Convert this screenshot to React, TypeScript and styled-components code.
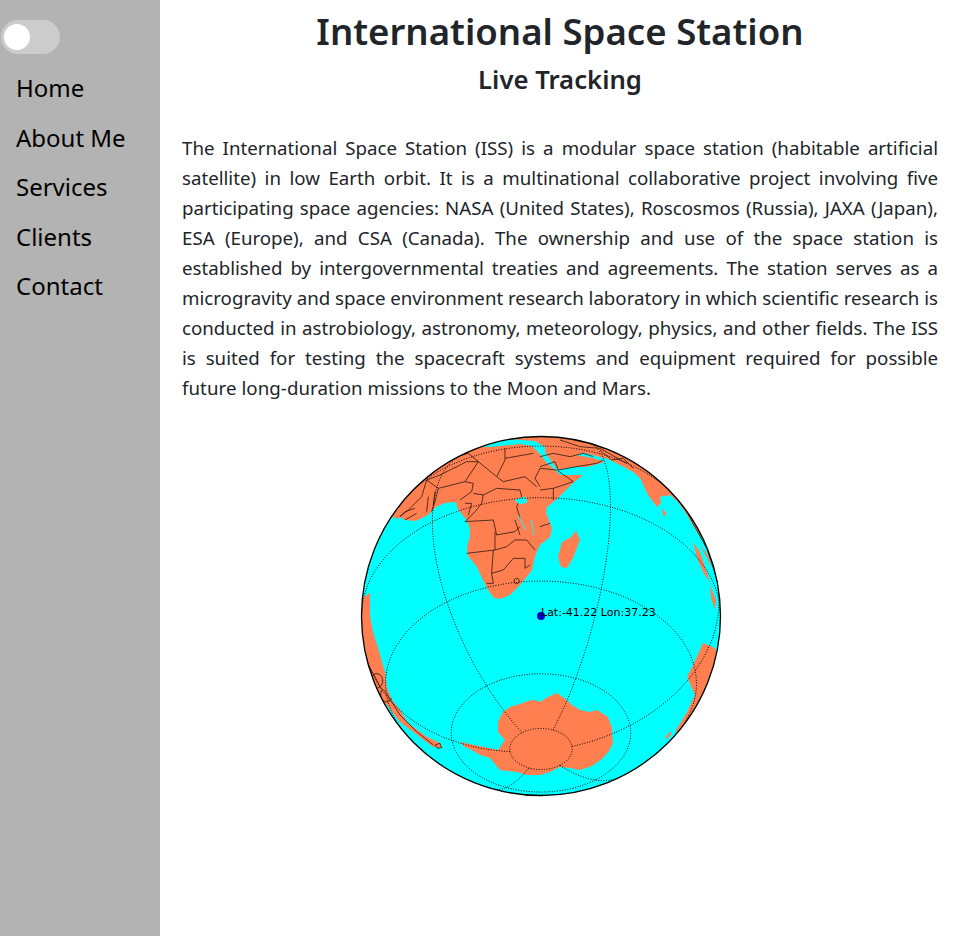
import React from "react";
import styled, { createGlobalStyle } from "styled-components";

const Global = createGlobalStyle`
  html, body { margin: 0; padding: 0; background: #fff; }
  body { font-family: "Noto Sans", "Open Sans", sans-serif; color: #212529; }
`;
const Page = styled.div`
  display: grid;
  grid-template-columns: 160px 1fr;
  min-height: 936px;
`;
const Sidebar = styled.nav`
  background: #b3b3b3;
  padding-top: 20px;
`;
const Toggle = styled.div`
  width: 59px;
  height: 34px;
  margin-left: 1px;
  margin-bottom: 9px;
  border-radius: 34px;
  background: #ccc;
  display: flex;
  align-items: center;
  padding-left: 3px;
  box-sizing: border-box;
`;
const Knob = styled.span`
  width: 26px;
  height: 26px;
  border-radius: 50%;
  background: #fff;
`;
const NavLink = styled.a`
  display: block;
  padding: 6px 8px 6px 16px;
  font-size: 24px;
  line-height: 37.5px;
  color: #000;
  text-decoration: none;
`;
const Main = styled.main`
  padding: 7px 22px 0;
  min-width: 0;
`;
const Title = styled.h1`
  margin: 0 0 8px;
  font-size: 36.6px;
  line-height: 48px;
  font-weight: 600;
  text-align: center;
`;
const Subtitle = styled.h2`
  margin: 0 0 36px;
  font-size: 25.7px;
  line-height: 34px;
  font-weight: 600;
  text-align: center;
`;
const Body = styled.p`
  margin: 0 0 22px;
  font-size: 18.7px;
  line-height: 30px;
`;
const Line = styled.span<{ $squeeze?: boolean; $last?: boolean }>`
  display: block;
  white-space: nowrap;
  text-align: ${(p) => (p.$last ? "left" : "justify")};
  text-align-last: ${(p) => (p.$last ? "left" : "justify")};
  word-spacing: ${(p) => (p.$squeeze ? "-2.4px" : "0")};
  letter-spacing: ${(p) => (p.$last ? "0.06px" : "0")};
`;
const Globe = styled.svg`
  display: block;
  margin: 0 auto;
  width: 418px;
  height: 380px;
`;
const Label = styled.text`
  font-family: "DejaVu Sans", sans-serif;
  font-size: 11px;
  fill: #000;
`;

const CX = 541, CY = 616, R = 179.5;
const rad = Math.PI / 180;
const LAT0 = -41.22 * rad, LON0 = 37.23 * rad;

function project(lat: number, lon: number): [number, number] | null {
  const p = lat * rad, l = lon * rad - LON0;
  const c = Math.sin(LAT0) * Math.sin(p) + Math.cos(LAT0) * Math.cos(p) * Math.cos(l);
  if (c < 0) return null;
  const x = R * Math.cos(p) * Math.sin(l);
  const y = R * (Math.cos(LAT0) * Math.sin(p) - Math.sin(LAT0) * Math.cos(p) * Math.cos(l));
  return [CX + x, CY - y];
}
function trace(points: [number, number][]): string {
  let d = "", pen = false;
  for (const [lat, lon] of points) {
    const q = project(lat, lon);
    if (!q) { pen = false; continue; }
    d += `${pen ? "L" : "M"}${q[0].toFixed(1)} ${q[1].toFixed(1)}`;
    pen = true;
  }
  return d;
}
const graticule: string[] = [];
for (const lat of [-80, -60, -30, 0, 30, 60]) {
  const pts: [number, number][] = [];
  for (let lon = -180; lon <= 180; lon += 1) pts.push([lat, lon]);
  graticule.push(trace(pts));
}
for (const lon of [-120, -60, 0, 60, 120, 180]) {
  const pts: [number, number][] = [];
  for (let lat = -80; lat <= 80; lat += 1) pts.push([lat, lon]);
  graticule.push(trace(pts));
}

const land = [
  // Africa
  "M398 519L400 517L405 520L416 521L428 515L436 507L445 503L456 502L457 507L460 512L466 519L470 528L470 536L467 548L468 556L477 567L482 578L488 590L494 598L500 599L510 595L518 587L525 579L532 570L535 556L540 545L550 537L552 528L550 523L546 512L547 507L557 499L573 483L583 475L560 475L553 468L546 462L540 454L532 446L520 444L490 447L470 446L440 440L380 480L375 510Z",
  // Arabia, Asia
  "M545 452L552 462L558 470L573 467L587 467L605 462L593 458L576 455L585 453L600 457L608 459L620 465L633 472L640 478L648 495L657 507L661 503L660 497L670 495L678 502L687 515L697 532L720 560L740 500L650 430L500 425L495 437L520 440L535 441L545 447Z",
  // Madagascar
  "M576 531L580 540L573 558L567 568L561 567L558 557L562 542L570 538Z",
  // Sri Lanka
  "M662 508L666 513L666 516L663 515Z",
  // Indonesia
  "M693 542L700 552L706 570L710 582L704 574L697 558Z",
  "M700 545L708 555L712 570L706 556Z",
  "M710 585L716 600L715 610L711 598Z",
  // South America
  "M350 600L362 598L370 593L370 615L373 632L378 648L385 672L387 688L392 700L400 710L408 723L427 737L440 743L442 748L433 747L420 737L400 722L387 705L360 690Z",
  // Antarctica
  "M460 742L465 747L472 750L480 755L490 758L495 764L500 770L517 772L527 775L540 775L550 772L560 767L570 768L580 770L592 766L603 758L609 751L613 743L612 735L612 728L608 717L597 710L590 712L580 710L572 705L567 700L557 693L548 697L540 702L535 700L528 701L520 704L510 707L503 712L498 722L498 732L505 740L498 750Z",
  // Australia
  "M703 643L715 648L718 655L730 660L720 700L690 730L675 732L687 712L695 695L687 677L693 665Z",
  "M665 737L670 732L672 733L667 739Z",
  "M633 770L637 767L638 768L635 771Z",
];

const africaBorders = [
  "M230 165L215 215L175 255L150 275",
  "M230 165L265 190L255 230L245 260",
  "M265 190L345 170L385 110L350 110L270 150L230 165",
  "M385 110L440 155L465 105L465 70",
  "M345 170L370 175L365 200L330 225",
  "M440 155L460 170L525 155L560 185",
  "M465 100L550 85",
  "M370 205L400 210L440 190L510 195L515 215L500 245L510 280",
  "M400 210L395 235L375 260L345 290",
  "M345 290L430 285L440 330L495 320L510 305",
  "M435 320L435 375L350 385",
  "M435 375L470 365L495 345L530 345L555 375",
  "M430 375L425 445L430 475L410 475",
  "M425 445L460 435L490 400L525 400L525 430L540 420",
  "M495 285L510 330",
  "M150 275L165 260L195 250M165 285L200 265",
  "M235 215L230 260M255 200L250 240",
  "M345 235L365 235L355 270",
  "M570 130L555 160L570 185",
  "M300 100L355 85L385 110",
];
const asiaBorders = [
  "M0 130L50 135L100 170L40 190L0 195",
  "M40 190L40 225",
  "M0 125L45 110L55 135L110 125L170 115L190 105",
  "M0 305L30 295",
  "M180 75L215 105L250 100L280 130",
  "M0 95L40 85L90 95L130 85L160 95",
  "M60 45L120 65L180 70L260 115",
  "M400 205L440 260L500 370L530 460",
];
const southAmericaBorders = [
  "M55 150L75 185L90 215L110 235L125 260L150 300L200 350L250 390",
  "M65 185A17 20 0 1 0 95 210A17 20 0 1 0 65 185",
  "M95 225A14 18 0 1 0 125 250",
  "M255 390L270 385L275 398L262 400Z",
];

const paragraph: { text: string; squeeze?: boolean; last?: boolean }[] = [
  { text: "The International Space Station (ISS) is a modular space station (habitable artificial" },
  { text: "satellite) in low Earth orbit. It is a multinational collaborative project involving five" },
  { text: "participating space agencies: NASA (United States), Roscosmos (Russia), JAXA (Japan),", squeeze: true },
  { text: "ESA (Europe), and CSA (Canada). The ownership and use of the space station is" },
  { text: "established by intergovernmental treaties and agreements. The station serves as a" },
  { text: "microgravity and space environment research laboratory in which scientific research is", squeeze: true },
  { text: "conducted in astrobiology, astronomy, meteorology, physics, and other fields. The ISS", squeeze: true },
  { text: "is suited for testing the spacecraft systems and equipment required for possible" },
  { text: "future long-duration missions to the Moon and Mars.", last: true },
];

export default function App() {
  return (
    <Page>
      <Global />
      <Sidebar>
        <Toggle><Knob /></Toggle>
        <NavLink href="#">Home</NavLink>
        <NavLink href="#">About Me</NavLink>
        <NavLink href="#">Services</NavLink>
        <NavLink href="#">Clients</NavLink>
        <NavLink href="#">Contact</NavLink>
      </Sidebar>
      <Main>
        <Title>International Space Station</Title>
        <Subtitle>Live Tracking</Subtitle>
        <Body>
          {paragraph.map((l) => (
            <Line key={l.text} $squeeze={l.squeeze} $last={l.last}>{l.text}</Line>
          ))}
        </Body>
        <Globe viewBox="351 425 418 380" role="img" aria-label="Orthographic map of the Earth with the ISS position">
          <defs>
            <clipPath id="earth"><circle cx={CX} cy={CY} r={R} /></clipPath>
          </defs>
          <circle cx={CX} cy={CY} r={R} fill="#00ffff" />
          <g clipPath="url(#earth)">
            {land.map((d, i) => <path key={i} d={d} fill="#ff7f50" />)}
            <g fill="none" stroke="#2a1a10" strokeWidth={0.8}>
              <g transform="translate(350 425) scale(.33333)">
                {africaBorders.map((d, i) => <path key={i} d={d} vectorEffect="non-scaling-stroke" />)}
                <circle cx={500} cy={468} r={8} vectorEffect="non-scaling-stroke" />
              </g>
              <g transform="translate(540 425) scale(.33333)">
                {asiaBorders.map((d, i) => <path key={i} d={d} vectorEffect="non-scaling-stroke" />)}
              </g>
              <g transform="translate(350 615) scale(.33333)">
                {southAmericaBorders.map((d, i) => <path key={i} d={d} vectorEffect="non-scaling-stroke" />)}
              </g>
            </g>
            <path d="M515 500L525 497L527 502L520 504ZM518 515L526 530M531 520L534 535" fill="#00ffff" stroke="#00ffff" strokeWidth={1} />
            <g fill="none" stroke="#000" strokeWidth={1} strokeDasharray="1 1.6">
              {graticule.map((d, i) => <path key={i} d={d} />)}
            </g>
          </g>
          <circle cx={CX} cy={CY} r={R} fill="none" stroke="#000" strokeWidth={1.3} />
          <circle cx={CX} cy={CY} r={4} fill="#0000cc" />
          <Label x={541} y={616}>Lat:-41.22 Lon:37.23</Label>
        </Globe>
      </Main>
    </Page>
  );
}
